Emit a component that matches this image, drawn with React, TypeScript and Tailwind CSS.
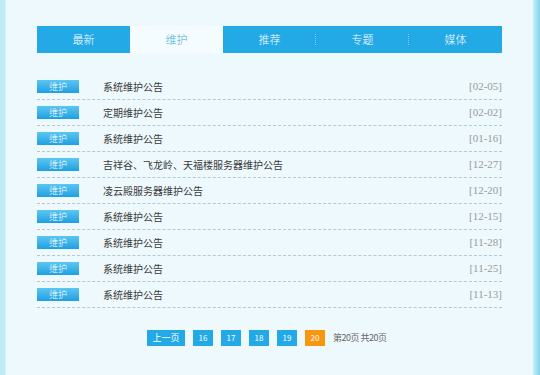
import React from 'react';

const TABS = ['最新', '维护', '推荐', '专题', '媒体'];

const NOTICES = [
  { title: '系统维护公告', date: '02-05' },
  { title: '定期维护公告', date: '02-02' },
  { title: '系统维护公告', date: '01-16' },
  { title: '吉祥谷、飞龙岭、天福楼服务器维护公告', date: '12-27' },
  { title: '凌云殿服务器维护公告', date: '12-20' },
  { title: '系统维护公告', date: '12-15' },
  { title: '系统维护公告', date: '11-28' },
  { title: '系统维护公告', date: '11-25' },
  { title: '系统维护公告', date: '11-13' },
];

const cjk = "font-['Noto_Sans_CJK_SC','Noto_Sans',sans-serif]";

const App: React.FC = () => {
  return (
    <div className={`flex w-[540px] h-[375px] bg-[#eef9fd] ${cjk}`}>
      <div className="w-[6px] h-full bg-[#bdebf6] border-r border-[#d6f1f9]" />

      <div className="flex-1 pl-[31px] pr-[31px] pt-[26px]">
        <nav className="flex h-[27px] bg-[#22a9e6]">
          {TABS.map((t, i) => (
            <div
              key={t}
              className={`relative flex-1 flex items-center justify-center text-[11px] font-light ${
                i === 1 ? 'bg-[#f4fcff] text-[#46a9d9]' : 'text-white'
              }`}
            >
              {t}
              {i >= 2 && i < 4 && (
                <span className="absolute right-0 top-[8px] h-[11px] border-r border-dotted border-[#7fd0f2]" />
              )}
            </div>
          ))}
        </nav>

        <ul className="mt-[21px]">
          {NOTICES.map((n, i) => (
            <li
              key={i}
              className="flex items-center h-[26px] border-b border-dashed border-[#b9c6cc]"
            >
              <span className="w-[42px] h-[13px] flex items-center justify-center text-[9px] leading-none text-white font-light bg-gradient-to-b from-[#5ac6f2] to-[#1c9fe0]">
                维护
              </span>
              <span className="ml-[24px] flex-1 text-[10px] text-[#3a3a3a]">{n.title}</span>
              <span className="font-['Liberation_Serif',serif] text-[11px] text-[#999]">[{n.date}]</span>
            </li>
          ))}
        </ul>

        <div className="flex items-center mt-[22px] ml-[110px] gap-[8px] text-[8px]">
          <span className="w-[38px] h-[16px] flex items-center justify-center bg-[#22a9e6] text-white text-[9px]">
            上一页
          </span>
          {['16', '17', '18', '19'].map((p) => (
            <span key={p} className="w-[20px] h-[16px] flex items-center justify-center bg-[#22a9e6] text-white">
              {p}
            </span>
          ))}
          <span className="w-[20px] h-[16px] flex items-center justify-center bg-[#f7960f] text-white">20</span>
          <span className="text-[9px] text-[#666] tracking-[-0.5px]">第20页 共20页</span>
        </div>
      </div>

      <div className="w-[7px] h-full bg-gradient-to-r from-[#c9eef8] to-[#7fd3ee]" />
    </div>
  );
};

export default App;
